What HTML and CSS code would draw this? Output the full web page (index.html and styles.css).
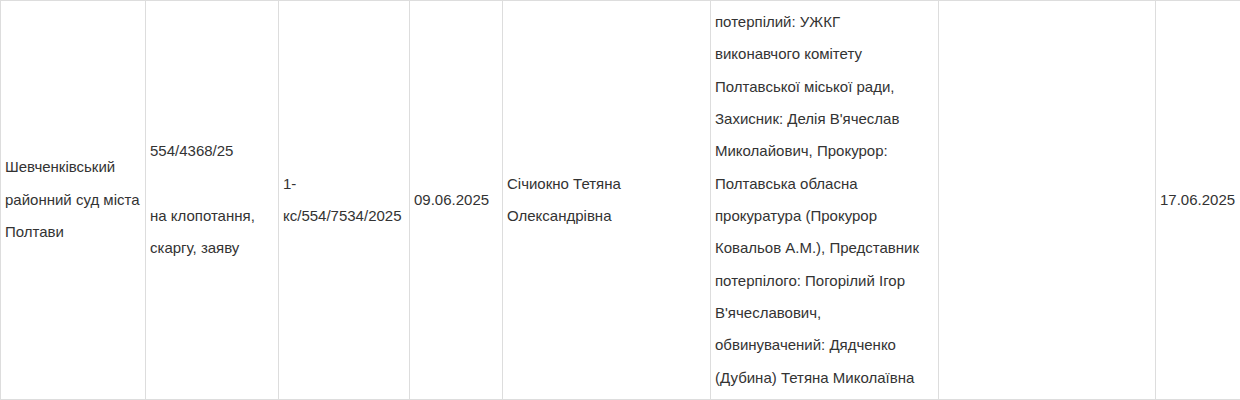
FILE: index.html
```html
<!DOCTYPE html>
<html lang="uk">
<head>
<meta charset="utf-8">
<link rel="stylesheet" href="styles.css">
</head>
<body>
<table class="cases">
  <colgroup>
    <col class="c1"><col class="c2"><col class="c3"><col class="c4"><col class="c5"><col class="c6"><col class="c7"><col class="c8">
  </colgroup>
  <tbody>
    <tr>
      <td>Шевченківський районний суд міста Полтави</td>
      <td>554/4368/25<br><br>на клопотання, скаргу, заяву</td>
      <td>1-кс/554/7534/2025</td>
      <td>09.06.2025</td>
      <td>Січиокно Тетяна Олександрівна</td>
      <td>потерпілий: УЖКГ<br>виконавчого комітету Полтавської міської ради, Захисник: Делія В'ячеслав Миколайович, Прокурор: Полтавська обласна прокуратура (Прокурор Ковальов А.М.), Представник потерпілого: Погорілий Ігор В'ячеславович, обвинувачений: Дядченко (Дубина) Тетяна Миколаївна</td>
      <td></td>
      <td>17.06.2025</td>
    </tr>
  </tbody>
</table>
</body>
</html>
```
FILE: styles.css
```css
html, body {
  margin: 0;
  padding: 0;
  background: #fff;
}
body {
  font-family: "Liberation Sans", Arial, sans-serif;
  font-size: 15px;
  color: #333;
}
.cases {
  width: 1240px;
  border-collapse: collapse;
  table-layout: fixed;
}
.cases td {
  border: 1px solid #ddd;
  padding: 5px 4px;
  line-height: 32.33px;
  vertical-align: middle;
  text-align: left;
}
.c1 { width: 145px; }
.c2 { width: 133px; }
.c3 { width: 131px; }
.c4 { width: 93px; }
.c5 { width: 208px; }
.c6 { width: 228px; }
.c7 { width: 217px; }
.c8 { width: 85px; }
```
